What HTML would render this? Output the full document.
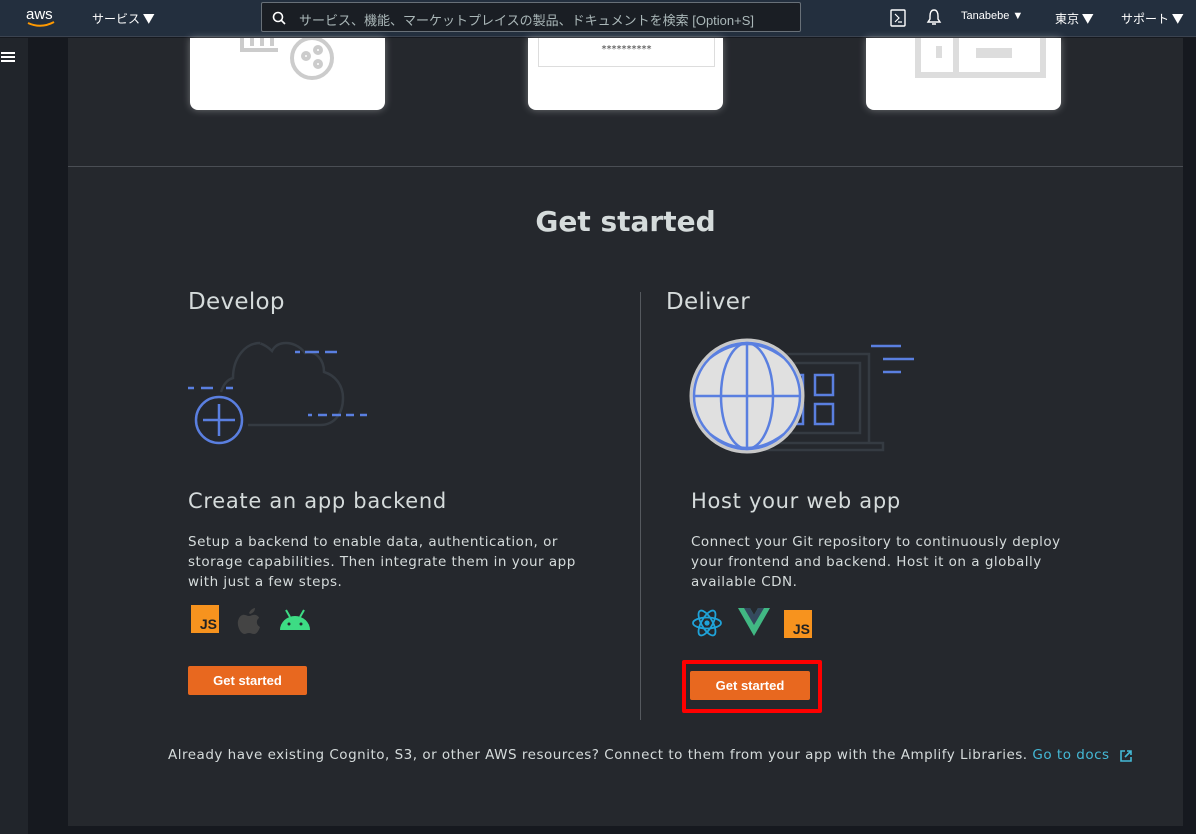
<!DOCTYPE html>
<html><head><meta charset="utf-8"><style>
*{margin:0;padding:0;box-sizing:border-box}
body{width:1196px;height:834px;overflow:hidden;background:#16191f;font-family:"DejaVu Sans","Liberation Sans","Noto Sans CJK JP",sans-serif;color:#d5dbdb;position:relative}
.hdr{position:absolute;left:0;top:0;width:1196px;height:37px;background:#232f3e;border-bottom:1px solid #3b4350}
.hdr span{position:absolute;color:#fff;font-size:12px;top:10px}
.search{position:absolute;left:261px;top:2px;width:540px;height:30px;border:1px solid #687078;background:#1a1e24;border-radius:2px;color:#aab7b8;font-size:13px;padding:7px 0 0 37px;font-family:"Liberation Sans","Noto Sans CJK JP",sans-serif}
.side{position:absolute;left:0;top:38px;width:28px;height:796px;background:#21252b}
.main{position:absolute;left:68px;top:38px;width:1115px;height:788px;background:#25282d}
.card{position:absolute;top:38px;width:195px;height:72px;background:#fff;border-radius:0 0 8px 8px;box-shadow:0 0 8px rgba(255,255,255,.35)}
.t{position:absolute;white-space:nowrap}
.btn{position:absolute;background:#e8681f;color:#fff;font-weight:bold;font-size:13px;text-align:center;line-height:29px;border-radius:2px;font-family:"Liberation Sans",sans-serif}
p.d{position:absolute;font-size:13.5px;line-height:20px;color:#d5dbdb;letter-spacing:.5px}
.js{position:absolute;width:28px;height:28px;background:#f7931e;color:#222;font-weight:bold;font-size:14px;font-family:"Liberation Sans",sans-serif;text-align:right;padding:9px 2px 0 0;line-height:20px}
.abs{position:absolute;left:0;top:0}
</style></head><body>
<div class="hdr">
<svg style="position:absolute;left:24px;top:5px" width="36" height="24"><text x="2" y="14" fill="#fff" font-size="15" font-family="Liberation Sans">aws</text><path d="M4 18 Q17 24 30 17" stroke="#f90" stroke-width="2" fill="none"/></svg>
<span style="left:92px;font-family:'Noto Sans CJK JP'">サービス ▼</span>
<div class="search">サービス、機能、マーケットプレイスの製品、ドキュメントを検索 [Option+S]</div>
<svg style="position:absolute;left:272px;top:11px" width="14" height="14"><circle cx="6" cy="6" r="4.5" stroke="#fff" stroke-width="1.6" fill="none"/><path d="M9 9l4 4" stroke="#fff" stroke-width="1.6"/></svg>
<svg style="position:absolute;left:890px;top:9px" width="16" height="18"><rect x="1" y="1" width="14" height="16" rx="1" stroke="#fff" fill="none" stroke-width="1.4"/><path d="M5 5l4 4-4 4M8 13h4" stroke="#fff" fill="none" stroke-width="1.2"/></svg>
<svg style="position:absolute;left:926px;top:8px" width="16" height="18"><path d="M8 2c-3 0-4 3-4 6v3l-2 3h12l-2-3V8c0-3-1-6-4-6zM6 16h4" stroke="#fff" fill="none" stroke-width="1.4"/></svg>
<span style="left:961px;font-size:11px;font-family:'Liberation Sans'">Tanabebe ▼</span>
<span style="left:1055px;font-family:'Noto Sans CJK JP'">東京 ▼</span>
<span style="left:1121px;font-family:'Noto Sans CJK JP'">サポート ▼</span>
</div>
<div class="side"><div style="position:absolute;left:1px;top:14px;width:14px;height:2px;background:#fff;box-shadow:0 4px #fff,0 8px #fff"></div></div>
<div class="main">
<div class="card" style="left:122px;top:0">
<svg width="195" height="72"><g stroke="#ccc" stroke-width="4" fill="none"><path d="M52 0v12h36"/><path d="M62 0v8M72 0v8M82 0v8"/><circle cx="122" cy="20" r="20"/><circle cx="116" cy="18" r="3"/><circle cx="128" cy="12" r="3"/><circle cx="128" cy="26" r="3"/></g></svg></div>
<div class="card" style="left:460px;top:0"><div style="position:absolute;left:10px;top:0;width:177px;height:29px;border:1px solid #ddd;border-top:none;text-align:center;font-size:10px;color:#444;padding-top:6px">**********</div></div>
<div class="card" style="left:798px;top:0"><svg width="195" height="72"><g fill="none" stroke="#ddd" stroke-width="6"><path d="M52 0v37h125V0M90 0v37"/></g><rect x="70" y="8" width="6" height="12" fill="#ddd"/><rect x="110" y="10" width="36" height="10" fill="#ddd"/></svg></div>
<div style="position:absolute;left:0;top:128px;width:1115px;height:1px;background:#4a4e54"></div>
<div class="t" style="left:0;width:1115px;text-align:center;top:167px;font-size:28px;font-weight:bold;color:#d5dbdb">Get started</div>
<div class="t" style="left:120px;top:251px;font-size:23px;letter-spacing:.3px">Develop</div>
<div class="t" style="left:598px;top:251px;font-size:23px;letter-spacing:.3px">Deliver</div>
<div style="position:absolute;left:572px;top:254px;width:1px;height:428px;background:#55595e"></div>
<div class="t" style="left:120px;top:451px;font-size:21px;letter-spacing:.7px">Create an app backend</div>
<div class="t" style="left:623px;top:451px;font-size:21px;letter-spacing:.7px">Host your web app</div>
<p class="d" style="left:120px;top:494px;width:400px">Setup a backend to enable data, authentication, or storage capabilities. Then integrate them in your app with just a few steps.</p>
<p class="d" style="left:623px;top:494px;width:395px">Connect your Git repository to continuously deploy your frontend and backend. Host it on a globally available CDN.</p>
<div class="js" style="left:123px;top:567px">JS</div>
<svg style="position:absolute;left:168px;top:567px" width="26" height="30"><path d="M13 8c2-4 5-5 6-5 0 3-2 5-5 6zM6 10c3-1 5 1 7 1s4-2 7-1c2 1 3 2 3 3-3 2-3 7 1 9-1 3-3 7-6 7-2 0-3-1-5-1s-3 1-5 1c-4-1-7-8-6-13 1-4 3-6 5-6z" fill="#444"/></svg>
<svg style="position:absolute;left:209px;top:568px" width="36" height="26"><path d="M3 24a15 14 0 0 1 30 0z" fill="#3ddc84"/><path d="M9 4l4 7M27 4l-4 7" stroke="#3ddc84" stroke-width="2"/><circle cx="12" cy="18" r="1.5" fill="#25282d"/><circle cx="24" cy="18" r="1.5" fill="#25282d"/></svg>
<svg style="position:absolute;left:623px;top:568px" width="32" height="34"><g stroke="#1fa3d9" stroke-width="1.8" fill="none"><ellipse cx="16" cy="17" rx="14" ry="5.5"/><ellipse cx="16" cy="17" rx="14" ry="5.5" transform="rotate(60 16 17)"/><ellipse cx="16" cy="17" rx="14" ry="5.5" transform="rotate(-60 16 17)"/></g><circle cx="16" cy="17" r="2.6" fill="#1fa3d9"/></svg>
<svg style="position:absolute;left:670px;top:569px" width="32" height="30"><path d="M0 1h12l4 7 4-7h12L16 29z" fill="#41b883"/><path d="M6 1h6l4 7 4-7h6L16 18z" fill="#34495e"/></svg>
<div class="js" style="left:716px;top:572px">JS</div>
<div class="btn" style="left:120px;top:628px;width:119px">Get started</div>
<div style="position:absolute;left:614px;top:622px;width:140px;height:53px;border:4px solid #f00;border-radius:2px"></div>
<div class="btn" style="left:622px;top:633px;width:120px">Get started</div>
<div class="t" style="left:100px;top:709px;font-size:13.5px;letter-spacing:.5px">Already have existing Cognito, S3, or other AWS resources? Connect to them from your app with the Amplify Libraries. <span style="color:#44b9d6">Go to docs</span></div>
<svg style="position:absolute;left:1051px;top:711px" width="14" height="14"><path d="M6 2H2v10h10V8M8 2h4v4M12 2L6 8" stroke="#44b9d6" stroke-width="1.6" fill="none"/></svg>
</div>
<svg class="abs" width="1196" height="834" style="pointer-events:none">
<path d="M248 425H320C335 425 343 413 343 398C343 384 334 375 324 372C324 360 316 350 305 353C299 345 291 343 286 343C278 343 274 347 272 351C264 343 257 343 260 343C245 343 233 358 233 378C226 380 223 386 221 392" stroke="#353b42" stroke-width="2.5" fill="none"/>
<g stroke="#5a7fe0" stroke-width="2.5" fill="none"><path d="M188 388h6M201 388h12M226 388h7M295 352h5M305 352h14M325 352h12M308 415h4M318 415h9M332 415h9M346 415h8M360 415h7"/><circle cx="219" cy="420" r="23"/><path d="M219 404v32M203 420h32"/></g>
<g stroke="#353b42" stroke-width="2.5" fill="none"><path d="M740 443V354h129v89M760 435V363h100v70H760M735 443h148v7H735z"/></g>
<g stroke="#5a7fe0" stroke-width="2.5" fill="none"><rect x="815" y="375" width="18" height="20"/><rect x="815" y="404" width="18" height="20"/><rect x="793" y="375" width="10" height="20"/><rect x="793" y="404" width="10" height="20"/><path d="M871 346h30M883 359h31M883 372h18"/></g>
<circle cx="747" cy="396" r="56" fill="#e0e0e0" stroke="#c8c8c8" stroke-width="3"/>
<g stroke="#5a7fe0" stroke-width="2.5" fill="none"><circle cx="747" cy="396" r="53"/><path d="M747 343v106M694 396h106"/><ellipse cx="747" cy="396" rx="26" ry="53"/><path d="M710 358q37-28 74 0M710 434q37 28 74 0"/></g>
</svg>
</body></html>
